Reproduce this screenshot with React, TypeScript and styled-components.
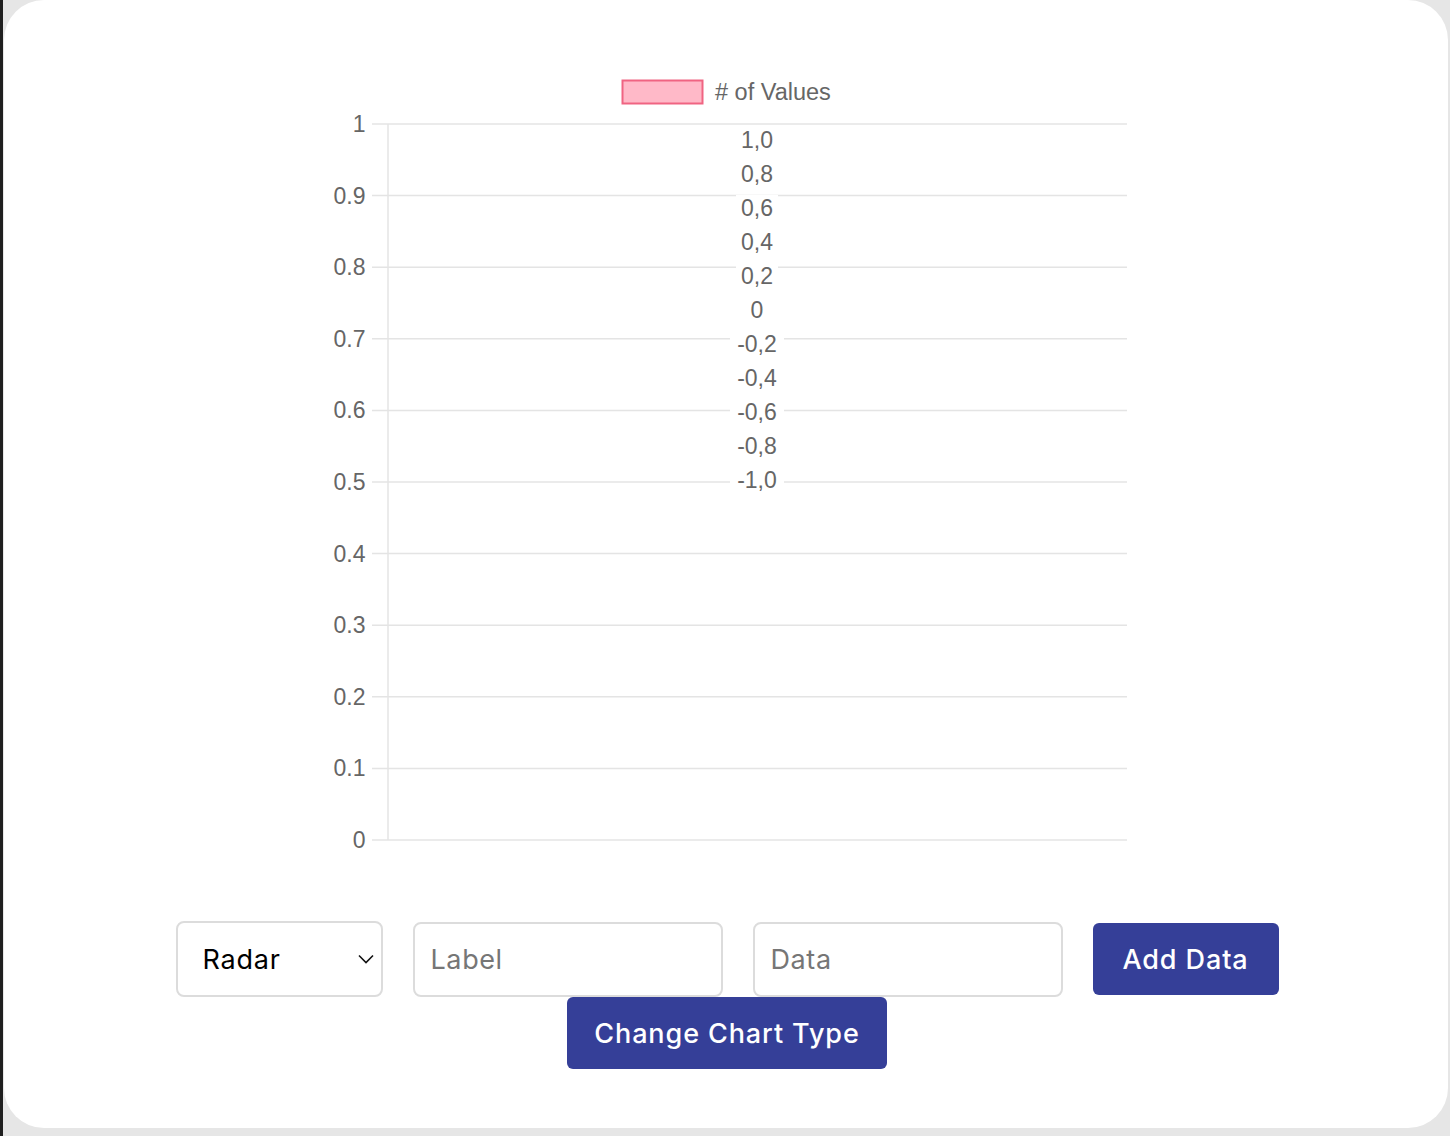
import React from "react";
import styled, { createGlobalStyle } from "styled-components";

const Global = createGlobalStyle`
  html, body { margin: 0; padding: 0; background: #e6e6e6; }
  * { box-sizing: border-box; }
`;

const Page = styled.div`
  min-height: 1136px;
  background: #e6e6e6;
  border-left: 3px solid #1f1f1f;
  display: flex;
  align-items: flex-start;
`;

const Card = styled.div`
  margin-left: 1px;
  width: 1444px;
  height: 1128px;
  background: #ffffff;
  border-radius: 40px;
  padding-top: 60px;
  display: flex;
  flex-direction: column;
  align-items: center;
`;

const ChartBox = styled.div`
  width: 802px;
  height: 800px;
  margin-left: 2px;
`;

const Controls = styled.div`
  margin-top: 61px;
  margin-left: 2px;
  width: 1120px;
  display: flex;
  flex-wrap: wrap;
  justify-content: center;
  align-items: center;
  column-gap: 30px;
  row-gap: 0;
`;

const SelectWrap = styled.div`
  position: relative;
  width: 207px;
  height: 76px;
`;

const Select = styled.select`
  appearance: none;
  -webkit-appearance: none;
  width: 100%;
  height: 100%;
  border: 2px solid #dcdcdc;
  border-radius: 8px;
  background: #fff;
  padding: 0 0 0 25px;
  font-family: Inter, "Open Sans", sans-serif;
  font-size: 27px;
  letter-spacing: 0.8px;
  color: #000;
  outline: none;
`;

const Chevron = styled.svg`
  position: absolute;
  right: 8px;
  top: 32px;
  pointer-events: none;
`;

const Input = styled.input`
  width: 310px;
  height: 75px;
  border: 2px solid #dcdcdc;
  border-radius: 8px;
  padding: 0 0 0 16px;
  font-family: Inter, "Open Sans", sans-serif;
  font-size: 27px;
  letter-spacing: 0.6px;
  color: #000;
  outline: none;
  &::placeholder { color: #767676; }
`;

const Button = styled.button<{ $w: number }>`
  width: ${(p) => p.$w}px;
  height: 72px;
  border: none;
  border-radius: 6px;
  background: #353f98;
  color: #fff;
  font-family: Inter, "Open Sans", sans-serif;
  font-size: 27px;
  letter-spacing: 0.9px;
  font-weight: 500;
  cursor: pointer;
`;

const OX = 326;
const OY = 60;
const FONT = '"Liberation Sans", Arial, sans-serif';

function Chart() {
  const top = 124 - OY;
  const bottom = 840 - OY;
  const left = 372 - OX;
  const axis = 388 - OX;
  const right = 1127 - OX;
  const ticks = Array.from({ length: 11 }, (_, i) => i);
  const radial = ["1,0", "0,8", "0,6", "0,4", "0,2", "0", "-0,2", "-0,4", "-0,6", "-0,8", "-1,0"];
  const cx = 757 - OX;
  return (
    <svg width={802} height={800} viewBox="0 0 802 800">
      <rect x={622.5 - OX} y={80.5 - OY} width={80} height={23} fill="rgba(255,99,132,0.45)" stroke="rgb(240,100,130)" strokeWidth={2} />
      <text x={715 - OX} y={100 - OY} fontFamily={FONT} fontSize={23.5} fill="#666">
        # of Values
      </text>
      {ticks.map((i) => {
        const y = top + ((bottom - top) * i) / 10;
        const v = 1 - i / 10;
        const label = i === 0 ? "1" : i === 10 ? "0" : v.toFixed(1);
        return (
          <g key={i}>
            <line x1={left} x2={right} y1={y} y2={y} stroke="#e4e4e4" strokeWidth={1.5} />
            <text x={365.5 - OX} y={y} textAnchor="end" dominantBaseline="central" fontFamily={FONT} fontSize={23} fill="#666">
              {label}
            </text>
          </g>
        );
      })}
      <line x1={axis} x2={axis} y1={top} y2={bottom} stroke="#e4e4e4" strokeWidth={1.5} />
      {radial.map((t, i) => {
        const y = 140 - OY + i * 34;
        const w = t.length * 12 + 6;
        return (
          <g key={t}>
            <rect x={cx - w / 2} y={y - 13} width={w} height={26} fill="#fff" />
            <text x={cx} y={y} textAnchor="middle" dominantBaseline="central" fontFamily={FONT} fontSize={23} fill="#666">
              {t}
            </text>
          </g>
        );
      })}
    </svg>
  );
}

export default function App() {
  return (
    <>
      <Global />
      <Page>
        <Card>
          <ChartBox>
            <Chart />
          </ChartBox>
          <Controls>
            <SelectWrap>
              <Select defaultValue="radar">
                <option value="radar">Radar</option>
                <option value="bar">Bar</option>
                <option value="line">Line</option>
              </Select>
              <Chevron width="18" height="12" viewBox="0 0 18 12">
                <path d="M2 2.5 L9 9.5 L16 2.5" fill="none" stroke="#111" strokeWidth="1.6" />
              </Chevron>
            </SelectWrap>
            <Input placeholder="Label" />
            <Input placeholder="Data" />
            <Button $w={186}>Add Data</Button>
            <Button $w={320}>Change Chart Type</Button>
          </Controls>
        </Card>
      </Page>
    </>
  );
}
